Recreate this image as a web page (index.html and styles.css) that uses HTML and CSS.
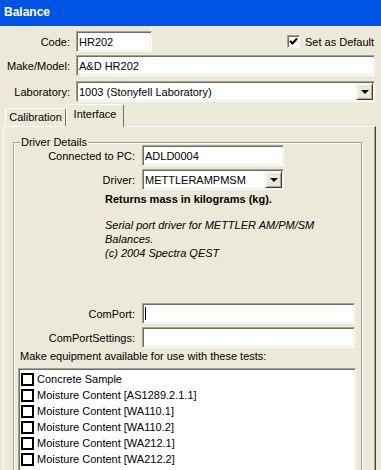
FILE: index.html
```html
<!DOCTYPE html>
<html lang="en">
<head>
    <meta charset="UTF-8">
    <title>Balance</title>
    <link rel="stylesheet" href="styles.css">
</head>
<body>
    <div class="window">
        <div class="titlebar">Balance</div>

        <div class="header">
            <div class="row row-code">
                <span class="lbl">Code:</span>
                <div class="field code-field">HR202</div>
                <div class="set-default">
                    <span class="xp-check">
                        <svg width="9" height="9" viewBox="0 0 9 9"><path d="M1 4 L3.5 6.5 L8 1.5" fill="none" stroke="#000" stroke-width="2"/></svg>
                    </span>
                    Set as Default
                </div>
            </div>
            <div class="row row-make">
                <span class="lbl">Make/Model:</span>
                <div class="field wide">A&amp;D HR202</div>
            </div>
            <div class="row row-lab">
                <span class="lbl">Laboratory:</span>
                <div class="field wide select">
                    <span class="select-text">1003 (Stonyfell Laboratory)</span>
                    <span class="drop-btn"><span class="arrow"></span></span>
                </div>
            </div>
        </div>

        <div class="tabs">
            <div class="tab">Calibration</div>
            <div class="tab active">Interface</div>
        </div>

        <div class="panel">
            <fieldset class="group">
                <legend>Driver Details</legend>

                <div class="grow g-conn">
                    <span class="glbl">Connected to PC:</span>
                    <div class="field pc-field">ADLD0004</div>
                </div>
                <div class="grow g-driver">
                    <span class="glbl">Driver:</span>
                    <div class="field pc-field select">
                        <span class="select-text">METTLERAMPMSM</span>
                        <span class="drop-btn"><span class="arrow"></span></span>
                    </div>
                </div>

                <div class="returns">Returns mass in kilograms (kg).</div>
                <div class="desc">
                    Serial port driver for METTLER AM/PM/SM<br>
                    Balances.<br>
                    (c) 2004 Spectra QEST
                </div>

                <div class="grow g-port">
                    <span class="glbl">ComPort:</span>
                    <div class="field port-field"><span class="caret"></span></div>
                </div>
                <div class="grow g-settings">
                    <span class="glbl">ComPortSettings:</span>
                    <div class="field port-field"></div>
                </div>

                <div class="tests-label">Make equipment available for use with these tests:</div>
                <div class="test-list">
                    <div class="test-item"><span class="box"></span>Concrete Sample</div>
                    <div class="test-item"><span class="box"></span>Moisture Content [AS1289.2.1.1]</div>
                    <div class="test-item"><span class="box"></span>Moisture Content [WA110.1]</div>
                    <div class="test-item"><span class="box"></span>Moisture Content [WA110.2]</div>
                    <div class="test-item"><span class="box"></span>Moisture Content [WA212.1]</div>
                    <div class="test-item"><span class="box"></span>Moisture Content [WA212.2]</div>
                </div>
            </fieldset>
        </div>
    </div>
</body>
</html>
```

FILE: styles.css
```css
* {
    margin: 0;
    padding: 0;
    box-sizing: border-box;
}

body {
    font-family: "Liberation Sans", Arial, sans-serif;
    font-size: 11px;
    color: #000;
    background: #ECE9D8;
    width: 381px;
    height: 470px;
    overflow: hidden;
}

.window {
    width: 381px;
    height: 470px;
    overflow: hidden;
}

.titlebar {
    height: 26px;
    background: #0054E3;
    color: #fff;
    font-size: 12px;
    font-weight: bold;
    padding-left: 4px;
    line-height: 25px;
}

/* top form */
.header {
    padding-top: 5px;
    padding-right: 6px;
}

.row {
    display: flex;
    align-items: center;
    height: 21px;
}

.row-make {
    margin-top: 3px;
}

.row-lab {
    margin-top: 5px;
}

.lbl {
    width: 70px;
    text-align: right;
    margin-right: 6px;
}

.field {
    height: 21px;
    background: #fff;
    border-style: solid;
    border-width: 1px;
    border-color: #A5A294 #fff #fff #A5A294;
    box-shadow: inset 1px 1px 0 #716F64, inset -1px -1px 0 #F1EFE2;
    padding-left: 2px;
    display: flex;
    align-items: center;
    white-space: nowrap;
    overflow: hidden;
}

.code-field {
    width: 76px;
}

.wide {
    width: 299px;
}

.select {
    padding-right: 1px;
}

.select-text {
    flex: 1;
}

.drop-btn {
    width: 17px;
    height: 17px;
    background: #ECE9D8;
    border: 1px solid;
    border-color: #F1EFE2 #404040 #404040 #F1EFE2;
    box-shadow: inset 1px 1px 0 #fff, inset -1px -1px 0 #ACA899;
    display: flex;
    align-items: center;
    justify-content: center;
}

.arrow {
    width: 0;
    height: 0;
    border-left: 4px solid transparent;
    border-right: 4px solid transparent;
    border-top: 4px solid #000;
    margin-top: 1px;
}

.set-default {
    margin-left: 135px;
    display: flex;
    align-items: center;
    gap: 5px;
}

.xp-check {
    width: 13px;
    height: 13px;
    background: #fff;
    border: 1px solid;
    border-color: #A5A294 #fff #fff #A5A294;
    box-shadow: inset 1px 1px 0 #716F64, inset -1px -1px 0 #F1EFE2;
    display: flex;
    align-items: center;
    justify-content: center;
}

/* tabs */
.tabs {
    display: flex;
    align-items: flex-end;
    margin-top: 2px;
    padding-left: 5px;
    height: 22px;
}

.tab {
    height: 18px;
    width: 61px;
    border: 1px solid;
    border-bottom: none;
    border-color: #fff #716F64 #716F64 #fff;
    border-radius: 2px 2px 0 0;
    text-align: center;
    line-height: 17px;
}

.tab.active {
    width: 58px;
    height: 23px;
    margin-bottom: -1px;
    background: #ECE9D8;
    line-height: 19px;
    position: relative;
    z-index: 1;
}

.panel {
    margin-left: 3px;
    width: 373px;
    height: 400px;
    border: 1px solid;
    border-color: #fff #404040 #404040 #fff;
    box-shadow: inset -1px 0 0 #ACA899;
    padding: 9px 13px 0 9px;
}

/* group box */
.group {
    border: 1px solid #A5A294;
    box-shadow: inset 1px 1px 0 #fff, 1px 1px 0 #fff;
    height: 360px;
    padding: 0;
}

.group legend {
    margin-left: 6px;
    padding: 0 1px;
    background: #ECE9D8;
    line-height: 13px;
}

.grow {
    display: flex;
    align-items: center;
    height: 21px;
}

.g-conn {
    margin-top: -4px;
}

.g-driver {
    margin-top: 3px;
}

.g-port {
    margin-top: 0;
}

.g-settings {
    margin-top: 3px;
}

.glbl {
    width: 123px;
    text-align: right;
    margin-right: 5px;
    padding-right: 2px;
}

.pc-field {
    width: 142px;
}

.port-field {
    width: 213px;
}

.caret {
    width: 1px;
    height: 13px;
    background: #000;
}

.returns {
    font-weight: bold;
    margin-left: 91px;
    margin-top: 3px;
    line-height: 13px;
}

.desc {
    font-style: italic;
    margin-left: 91px;
    margin-top: 12px;
    line-height: 14px;
    height: 85px;
}

.tests-label {
    margin-left: 6px;
    margin-top: 2px;
    line-height: 13px;
}

.test-list {
    margin-left: 4px;
    margin-top: 5px;
    width: 338px;
    height: 120px;
    background: #fff;
    border: 1px solid;
    border-color: #A5A294 #fff #fff #A5A294;
    box-shadow: inset 1px 1px 0 #716F64, inset -1px -1px 0 #F1EFE2;
    padding: 2px 0 0 2px;
}

.test-item {
    display: flex;
    align-items: center;
    height: 16px;
    white-space: nowrap;
}

.box {
    width: 13px;
    height: 13px;
    border: 2px solid #000;
    margin-right: 3px;
    background: #fff;
}
```
